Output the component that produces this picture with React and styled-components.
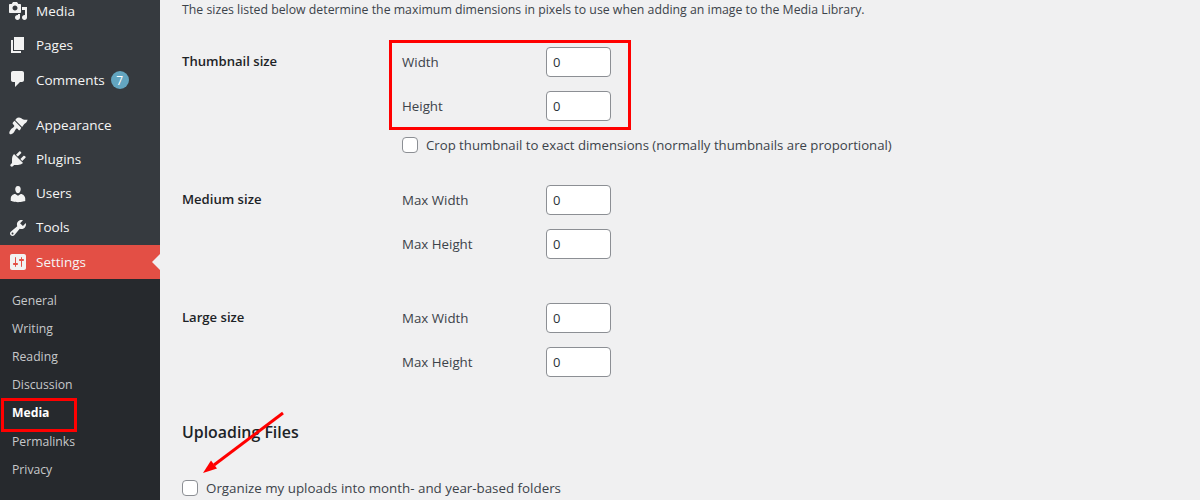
import React from 'react';
import styled, { createGlobalStyle } from 'styled-components';

const ICONS = {
  media: 'M13 11V4c0-.55-.45-1-1-1h-1.67L9 1H5L3.67 3H2c-.55 0-1 .45-1 1v7c0 .55.45 1 1 1h10c.55 0 1-.45 1-1zM7 4.5c1.38 0 2.5 1.12 2.5 2.5S8.38 9.5 7 9.5 4.5 8.38 4.5 7 5.62 4.5 7 4.5zM14 6h5v10.5c0 1.38-1.12 2.5-2.5 2.5S14 17.88 14 16.5s1.12-2.5 2.5-2.5c.17 0 .34.02.5.05V9h-3V6zm-4 8.05V13h2v3.5c0 1.38-1.12 2.5-2.5 2.5S7 17.88 7 16.5 8.12 14 9.5 14c.17 0 .34.02.5.05z',
  pages: 'M6 15V2h10v13H6zm-1 1h8v2H3V5h2v11z',
  comments: 'M5 2h9c1.1 0 2 .9 2 2v7c0 1.1-.9 2-2 2h-2l-5 5v-5H5c-1.1 0-2-.9-2-2V4c0-1.1.9-2 2-2z',
  appearance: 'M14.1 12 L7.2 5 L8.9 3.1 C9.8 2.2 12 2.3 13.3 3.2 C15 4.3 16.6 5.2 19.6 4.7 C19 7 17.7 8.2 16.3 8.9 Z M13.3 12.7 L6.5 5.7 L4.9 7.5 C4.5 7.9 4.5 8.5 4.9 8.9 L6 10.2 C6.4 10.6 6.4 11.3 6 11.7 C5.4 12.3 4.6 12.9 3.8 13.6 C3.4 14 3 14.3 2.7 14.7 C1.4 16.1 .9 18.1 1.7 18.9 C2.5 19.7 4.2 19 5.5 17.7 C5.8 17.3 6.1 16.9 6.4 16.4 C7 15.4 7.5 14.4 8.1 13.7 C8.5 13.3 9.1 13.3 9.5 13.7 L10.6 15 C11 15.4 11.6 15.4 12 15 Z',
  plugins: 'M13.11 4.36L9.87 7.6 8 5.73l3.24-3.24c.35-.34 1.05-.2 1.56.32.52.51.66 1.21.31 1.55zm-8 1.77l.91-1.12 9.01 9.01-1.19.84c-.71.71-2.63 1.16-3.82 1.16H6.14L4.9 17.26c-.59.59-1.54.59-2.12 0-.59-.58-.59-1.53 0-2.12l1.24-1.24v-3.88c0-1.13.4-3.19 1.09-3.89zm7.26 3.97l3.24-3.24c.34-.35 1.04-.21 1.55.31.52.51.66 1.21.31 1.55l-3.24 3.25z',
  users: 'M10 9.25c-2.27 0-2.73-3.44-2.73-3.44C7 4.02 7.82 2 9.97 2c2.16 0 2.98 2.02 2.71 3.81 0 0-.41 3.44-2.68 3.44zm0 2.57L12.72 10c2.39 0 4.52 2.33 4.52 4.53v2.49s-3.65 1.13-7.24 1.13c-3.65 0-7.24-1.13-7.24-1.13v-2.49c0-2.25 1.94-4.48 4.47-4.48z',
  tools: 'M16.68 9.77c-1.34 1.34-3.3 1.67-4.95.99l-5.41 6.52c-.99.99-2.59.99-3.58 0s-.99-2.59 0-3.57l6.52-5.42c-.68-1.65-.35-3.61.99-4.95 1.28-1.28 3.12-1.62 4.72-1.06l-2.89 2.89 2.82 2.82 2.86-2.87c.53 1.58.18 3.39-1.08 4.65zM3.81 16.21c.4.39 1.04.39 1.43 0 .4-.4.4-1.04 0-1.43-.39-.4-1.03-.4-1.43 0-.39.39-.39 1.03 0 1.43z',
  settings: 'M18 16V4c0-1.1-.9-2-2-2H4c-1.1 0-2 .9-2 2v12c0 1.1.9 2 2 2h12c1.1 0 2-.9 2-2zM8 11h1c.55 0 1 .45 1 1s-.45 1-1 1H8v1.5c0 .28-.22.5-.5.5s-.5-.22-.5-.5V13H6c-.55 0-1-.45-1-1s.45-1 1-1h1V5.5c0-.28.22-.5.5-.5s.5.22.5.5V11zm5-2h-1c-.55 0-1-.45-1-1s.45-1 1-1h1V5.5c0-.28.22-.5.5-.5s.5.22.5.5V7h1c.55 0 1 .45 1 1s-.45 1-1 1h-1v5.5c0 .28-.22.5-.5.5s-.5-.22-.5-.5V9z',
};

const SIZE_GROUPS = [
  { title: 'Thumbnail size', labels: ['Width', 'Height'], crop: true },
  { title: 'Medium size', labels: ['Max Width', 'Max Height'] },
  { title: 'Large size', labels: ['Max Width', 'Max Height'] },
];

const SUBMENU = ['General', 'Writing', 'Reading', 'Discussion', 'Media', 'Permalinks', 'Privacy'];

function MenuIcon({ name }) {
  return (
    <IconSvg viewBox="0 0 20 20">
      <path d={ICONS[name]} />
    </IconSvg>
  );
}

function MenuRow({ icon, label, active, low, children }) {
  return (
    <Row $active={active}>
      <MenuIcon name={icon} />
      <RowLabel $low={low}>{label}</RowLabel>
      {children}
    </Row>
  );
}

export default function App() {
  return (
    <Page>
      <GlobalStyle />
      <Sidebar>
        <Menu>
          <MenuRow icon="media" label="Media" />
          <MenuRow icon="pages" label="Pages" />
          <MenuRow icon="comments" label="Comments" low>
            <Badge>7</Badge>
          </MenuRow>
          <Separator />
          <MenuRow icon="appearance" label="Appearance" />
          <MenuRow icon="plugins" label="Plugins" />
          <MenuRow icon="users" label="Users" />
          <MenuRow icon="tools" label="Tools" />
          <MenuRow icon="settings" label="Settings" active low />
        </Menu>
        <Submenu>
          {SUBMENU.map((item) => (
            <SubItem key={item} $current={item === 'Media'}>
              {item}
            </SubItem>
          ))}
        </Submenu>
      </Sidebar>
      <Main>
        <Intro>The sizes listed below determine the maximum dimensions in pixels to use when adding an image to the Media Library.</Intro>
        {SIZE_GROUPS.map((group) => (
          <SizeGroup key={group.title}>
            <GroupTitle>{group.title}</GroupTitle>
            <Fields>
              {group.labels.map((label) => (
                <Field key={label}>
                  <FieldLabel>{label}</FieldLabel>
                  <NumberInput type="text" defaultValue="0" />
                </Field>
              ))}
              {group.crop && (
                <CheckRow>
                  <Checkbox type="checkbox" />
                  Crop thumbnail to exact dimensions (normally thumbnails are proportional)
                </CheckRow>
              )}
            </Fields>
          </SizeGroup>
        ))}
        <Heading>Uploading Files</Heading>
        <CheckRow $wide>
          <Checkbox type="checkbox" />
          Organize my uploads into month- and year-based folders
        </CheckRow>
      </Main>
      <SideMark />
      <FieldsMark />
      <Arrow viewBox="0 0 90 70">
        <path d="M83 2 L14 54" stroke="#f00" strokeWidth="3" fill="none" />
        <path d="M3 62 L11 49.6 L17 57.6 Z" fill="#f00" />
      </Arrow>
    </Page>
  );
}

const GlobalStyle = createGlobalStyle`
  html, body {
    margin: 0;
    padding: 0;
    background: #f0f0f1;
  }
  * {
    box-sizing: border-box;
  }
`;

const Page = styled.div`
  position: relative;
  display: flex;
  width: 1200px;
  height: 500px;
  overflow: hidden;
  background: #f0f0f1;
  font-family: 'Open Sans', 'Noto Sans', sans-serif;
  font-size: 13px;
  color: #3c434a;
`;

const Sidebar = styled.div`
  width: 160px;
  flex-shrink: 0;
  background: #26292d;
`;

const Menu = styled.div`
  margin-top: -6px;
  background: #363a3f;
`;

const Row = styled.div`
  position: relative;
  display: flex;
  align-items: center;
  height: 34.2px;
  padding-left: 8px;
  font-size: 13.5px;
  color: #f5f5f5;
  background: ${(p) => (p.$active ? '#e34f45' : 'transparent')};

  ${(p) =>
    p.$active &&
    `
    &::after {
      content: '';
      position: absolute;
      right: 0;
      top: 50%;
      margin-top: -8px;
      border: 8px solid transparent;
      border-right-color: #f0f0f1;
    }
  `}
`;

const RowLabel = styled.span`
  margin-top: ${(p) => (p.$low ? '1px' : '-1px')};
`;

const IconSvg = styled.svg`
  width: 20px;
  height: 20px;
  margin-right: 8px;
  flex-shrink: 0;
  fill: #f2f2f2;
`;

const Badge = styled.span`
  display: flex;
  align-items: center;
  justify-content: center;
  width: 18px;
  height: 18px;
  margin: 2px 0 0 6px;
  border-radius: 50%;
  background: #63a5c0;
  color: #fff;
  font-size: 12px;
`;

const Separator = styled.div`
  height: 11.5px;
`;

const Submenu = styled.div`
  padding: 7.6px 0;
`;

const SubItem = styled.div`
  height: 28.2px;
  padding: 5px 12px;
  line-height: 18.2px;
  font-size: 12.2px;
  color: ${(p) => (p.$current ? '#fff' : '#c6c8ca')};
  font-weight: ${(p) => (p.$current ? 700 : 400)};
`;

const Main = styled.div`
  flex: 1;
  display: flex;
  flex-direction: column;
  align-items: flex-start;
  padding-left: 22px;
`;

const Intro = styled.p`
  margin: 1px 0 28px;
  height: 18px;
  line-height: 18px;
  font-size: 12.3px;
  white-space: nowrap;
`;

const SizeGroup = styled.div`
  display: flex;
  margin-bottom: 32px;

  & + & {
    margin-bottom: 44px;
  }
`;

const GroupTitle = styled.div`
  width: 220px;
  padding-top: 5px;
  line-height: 18px;
  font-weight: 600;
  font-size: 13.1px;
  color: #1d2327;
`;

const Fields = styled.div`
  display: flex;
  flex-direction: column;
  gap: 14px;
`;

const Field = styled.div`
  display: flex;
  align-items: center;
`;

const FieldLabel = styled.label`
  width: 144px;
  font-size: 13.3px;
`;

const NumberInput = styled.input`
  width: 65px;
  height: 30px;
  padding: 0 6px;
  border: 1px solid #8c8f94;
  border-radius: 4px;
  background: #fff;
  color: #2c3338;
  font-family: inherit;
  font-size: 13px;
`;

const CheckRow = styled.label`
  display: flex;
  align-items: center;
  height: 16px;
  margin-top: 2px;
  font-size: ${(p) => (p.$wide ? '13.35px' : '13.2px')};
  white-space: nowrap;
`;

const Checkbox = styled.input`
  appearance: none;
  width: 16px;
  height: 16px;
  margin: 0 8px 0 0;
  border: 1px solid #8c8f94;
  border-radius: 4px;
  background: #fff;
`;

const Heading = styled.h2`
  margin: 0 0 35px;
  height: 22px;
  line-height: 22px;
  font-size: 15.9px;
  font-weight: 600;
  color: #1d2327;
`;

const SideMark = styled.div`
  position: absolute;
  left: 1px;
  top: 398px;
  width: 76px;
  height: 34px;
  border: 3px solid #f00;
`;

const FieldsMark = styled.div`
  position: absolute;
  left: 389px;
  top: 40px;
  width: 242px;
  height: 90px;
  border: 3px solid #f00;
`;

const Arrow = styled.svg`
  position: absolute;
  left: 200px;
  top: 411px;
  width: 90px;
  height: 70px;
`;
